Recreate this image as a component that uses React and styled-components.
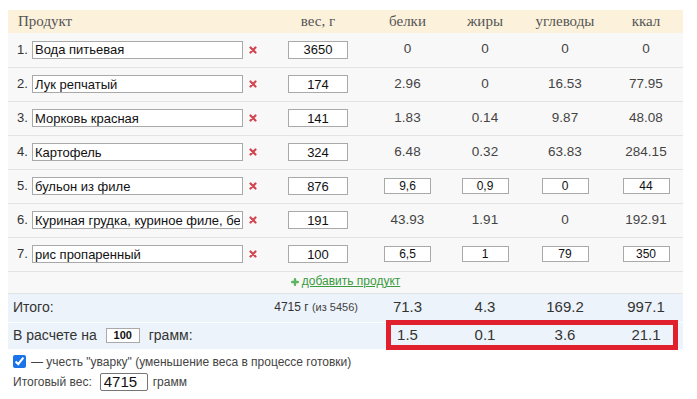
import React from "react";
import styled, { createGlobalStyle } from "styled-components";

const Global = createGlobalStyle`
  html, body { margin: 0; padding: 0; background: #fff; }
  body { font-family: "Liberation Sans", Arial, sans-serif; color: #333; }
`;

const Page = styled.div`
  padding: 10px 0 0 8px;
  width: 675px;
`;

const Wrap = styled.div`
  position: relative;
`;

const Table = styled.table`
  width: 675px;
  border-collapse: collapse;
  table-layout: fixed;
`;

const Th = styled.th`
  background: #fcf2dc;
  font-family: "Liberation Serif", "Times New Roman", serif;
  font-size: 15px;
  font-weight: normal;
  color: #555;
  height: 23px;
  padding: 0;
  text-align: ${(p) => (p.$left ? "left" : "center")};
  padding-left: ${(p) => (p.$left ? "10px" : "0")};
`;

const Tr = styled.tr`
  background: ${(p) => (p.$blue ? "#edf3fa" : "#f8f8f8")};
  border-bottom: 1px solid ${(p) => (p.$blue ? "#fbfdff" : "#e3e3e3")};
  height: ${(p) => p.$h || 34}px;
`;

const Td = styled.td`
  padding: 0;
  text-align: ${(p) => p.$align || "center"};
  font-size: ${(p) => p.$fs || 13.5}px;
  color: ${(p) => p.$color || "#444"};
  vertical-align: middle;
  line-height: 1.1;
`;

const ProductBox = styled.div`
  display: flex;
  align-items: center;
  padding-left: 9px;
`;

const Num = styled.span`
  width: 15px;
  font-size: 13px;
  color: #333;
`;

const TextInput = styled.input`
  box-sizing: border-box;
  width: ${(p) => p.$w}px;
  height: ${(p) => p.$h || 18}px;
  border: 1px solid #a9a9a9;
  background: #fff;
  padding: 0 2px;
  margin: 0;
  font-family: "Liberation Sans", Arial, sans-serif;
  font-size: ${(p) => p.$fs || 13}px;
  font-weight: ${(p) => (p.$bold ? "bold" : "normal")};
  color: #111;
  text-align: ${(p) => (p.$center ? "center" : "left")};
  outline: none;
  vertical-align: middle;
`;

const Remove = styled.svg`
  margin-left: 6px;
  flex: none;
`;

const AddLink = styled.a`
  display: inline-flex;
  align-items: center;
  gap: 3px;
  font-size: 12px;
  color: #3a9a3e;
  text-decoration: underline;
`;

const Label = styled.span`
  font-size: 14px;
  color: #333;
`;

const PerRow = styled.div`
  display: flex;
  align-items: center;
  padding-left: 5px;
  font-size: 14px;
  color: #333;
  gap: 9px;
`;

const WeightTotal = styled.span`
  font-size: 12px;
  color: #333;
  padding-right: 8px;
  small { font-size: 11px; color: #444; }
`;

const RedFrame = styled.div`
  position: absolute;
  left: 378px;
  top: 310px;
  width: 292px;
  height: 30px;
  box-sizing: border-box;
  border: 5px solid #e1202d;
  pointer-events: none;
`;

const Options = styled.div`
  padding-left: 5px;
  margin-top: 5px;
  display: flex;
  flex-direction: column;
  gap: 4px;
  font-size: 12px;
  color: #444;
`;

const OptRow = styled.label`
  display: flex;
  align-items: center;
  gap: 5px;
`;

const Check = styled.input`
  width: 13px;
  height: 13px;
  margin: 0;
  accent-color: #1a73e8;
`;

const FinalInput = styled.input`
  box-sizing: border-box;
  width: 48px;
  height: 18px;
  border: 1px solid #767676;
  border-radius: 2px;
  padding: 0 3px;
  margin: 0 0 0 3px;
  font-family: "Liberation Sans", Arial, sans-serif;
  font-size: 15px;
  color: #111;
`;

const rows = [
  { n: "Вода питьевая", w: "3650", v: ["0", "0", "0", "0"] },
  { n: "Лук репчатый", w: "174", v: ["2.96", "0", "16.53", "77.95"] },
  { n: "Морковь красная", w: "141", v: ["1.83", "0.14", "9.87", "48.08"] },
  { n: "Картофель", w: "324", v: ["6.48", "0.32", "63.83", "284.15"] },
  { n: "бульон из филе", w: "876", v: ["9,6", "0,9", "0", "44"], edit: true },
  { n: "Куриная грудка, куриное филе, без кожи", w: "191", v: ["43.93", "1.91", "0", "192.91"] },
  { n: "рис пропаренный", w: "100", v: ["6,5", "1", "79", "350"], edit: true },
];

const XIcon = () => (
  <Remove width="8" height="8" viewBox="0 0 8 8">
    <path d="M1.5 1.5 L6.5 6.5 M6.5 1.5 L1.5 6.5" stroke="#d2434e" strokeWidth="2.2" strokeLinecap="round" />
  </Remove>
);

const Plus = () => (
  <svg width="8" height="8" viewBox="0 0 8 8">
    <path d="M4 1.2 V6.8 M1.2 4 H6.8" stroke="#5cb460" strokeWidth="2.4" strokeLinecap="round" />
  </svg>
);

export default function App() {
  return (
    <Page>
      <Global />
      <Wrap>
        <Table>
          <colgroup>
            <col style={{ width: 262 }} />
            <col style={{ width: 96 }} />
            <col style={{ width: 83 }} />
            <col style={{ width: 72 }} />
            <col style={{ width: 88 }} />
            <col style={{ width: 74 }} />
          </colgroup>
          <thead>
            <tr>
              <Th $left>Продукт</Th>
              <Th>вес, г</Th>
              <Th>белки</Th>
              <Th>жиры</Th>
              <Th>углеводы</Th>
              <Th>ккал</Th>
            </tr>
          </thead>
          <tbody>
            {rows.map((r, i) => (
              <Tr key={i}>
                <Td $align="left">
                  <ProductBox>
                    <Num>{i + 1}.</Num>
                    <TextInput $w={211} defaultValue={r.n} />
                    <XIcon />
                  </ProductBox>
                </Td>
                <Td>
                  <TextInput $w={60} $center defaultValue={r.w} />
                </Td>
                {r.v.map((v, j) => (
                  <Td key={j}>
                    {r.edit ? <TextInput $w={47} $h={16} $fs={12} $center defaultValue={v} /> : v}
                  </Td>
                ))}
              </Tr>
            ))}
            <Tr $h={22}>
              <Td colSpan={6}>
                <AddLink href="#">
                  <Plus />
                  добавить продукт
                </AddLink>
              </Td>
            </Tr>
            <Tr $blue $h={29}>
              <Td $align="left">
                <PerRow>Итого:</PerRow>
              </Td>
              <Td $align="right">
                <WeightTotal>
                  4715 г <small>(из 5456)</small>
                </WeightTotal>
              </Td>
              <Td $fs={15} $color="#333">71.3</Td>
              <Td $fs={15} $color="#333">4.3</Td>
              <Td $fs={15} $color="#333">169.2</Td>
              <Td $fs={15} $color="#333">997.1</Td>
            </Tr>
            <Tr $blue $h={27}>
              <Td $align="left">
                <PerRow>
                  <Label>В расчете на</Label>
                  <TextInput $w={34} $h={15} $fs={11} $bold $center defaultValue="100" />
                  <Label>грамм:</Label>
                </PerRow>
              </Td>
              <Td />
              <Td $fs={15} $color="#333">1.5</Td>
              <Td $fs={15} $color="#333">0.1</Td>
              <Td $fs={15} $color="#333">3.6</Td>
              <Td $fs={15} $color="#333">21.1</Td>
            </Tr>
          </tbody>
        </Table>
        <RedFrame />
      </Wrap>
      <Options>
        <OptRow>
          <Check type="checkbox" defaultChecked />
          <span>— учесть "уварку" (уменьшение веса в процессе готовки)</span>
        </OptRow>
        <OptRow>
          <span>Итоговый вес:</span>
          <FinalInput defaultValue="4715" />
          <span>грамм</span>
        </OptRow>
      </Options>
    </Page>
  );
}
